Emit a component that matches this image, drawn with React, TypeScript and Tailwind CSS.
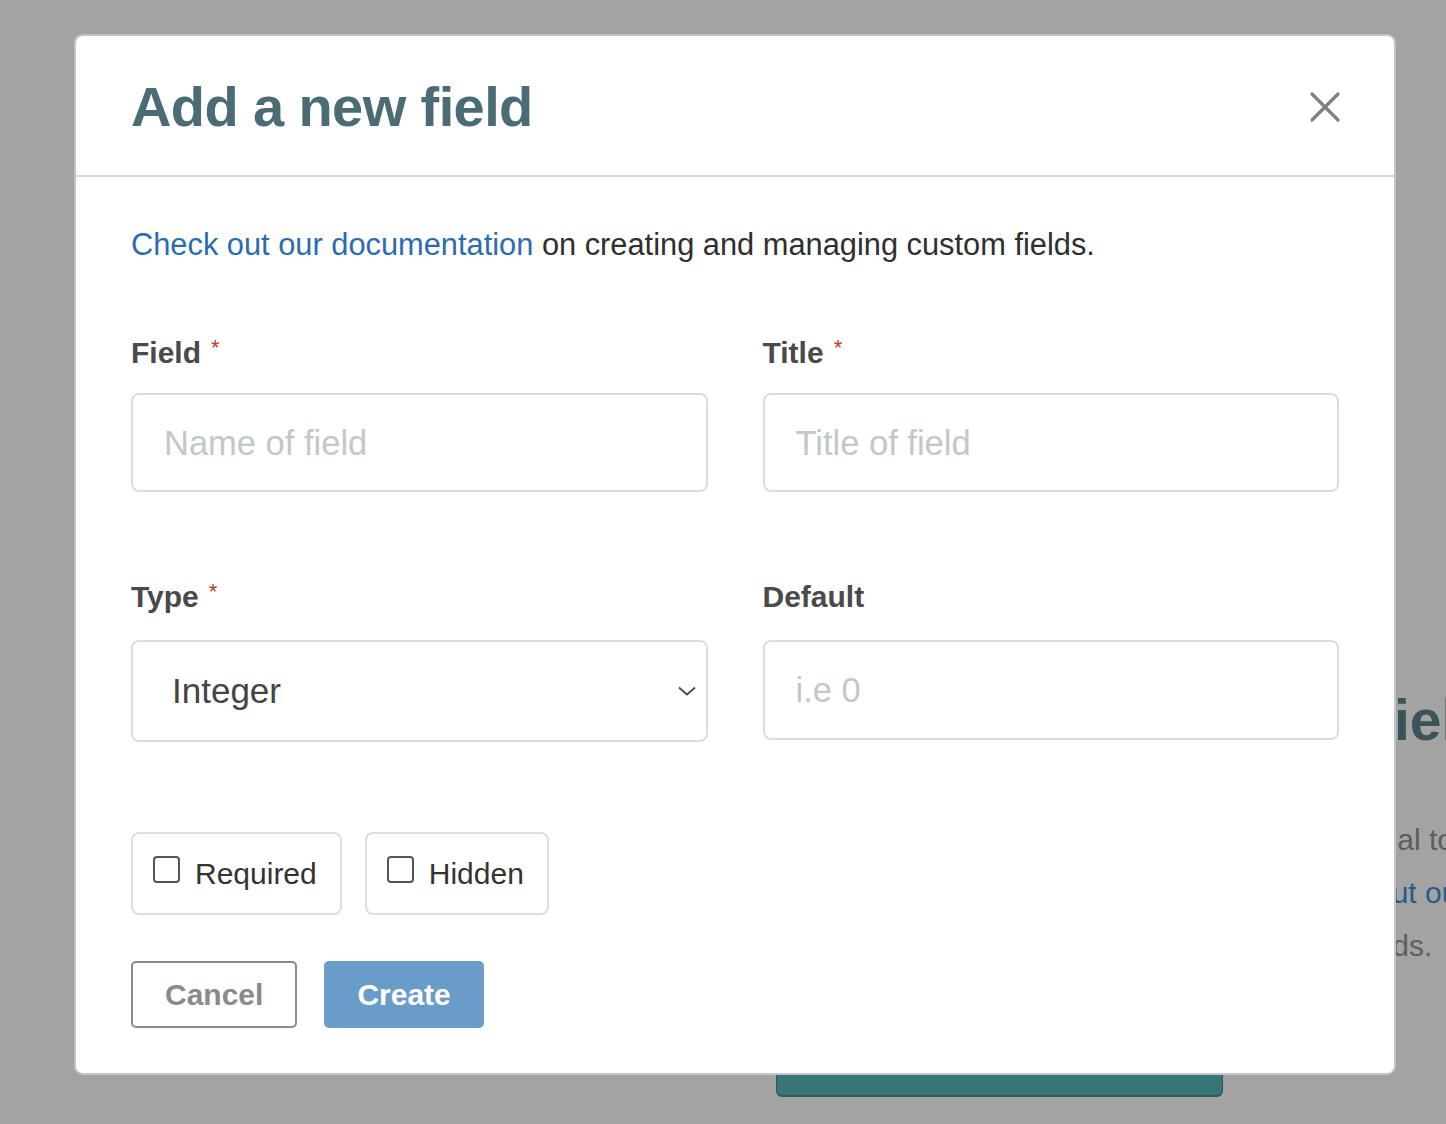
import React from "react";

const font = { fontFamily: '"Liberation Sans", Arial, Helvetica, sans-serif' };

function Label({ text, required }: { text: string; required?: boolean }) {
  return (
    <div className="flex items-start h-[36px] leading-[36px]">
      <span className="text-[30px] font-bold text-[#4a4a4a]">{text}</span>
      {required && (
        <span className="ml-[10px] text-[22px] leading-[22px] mt-[2px] text-[#c0392b]">*</span>
      )}
    </div>
  );
}

function Checkbox({ label }: { label: string }) {
  return (
    <label className="inline-flex items-center h-[83px] border-2 border-[#dedede] rounded-[8px] pl-[20px] pr-[23px]">
      <span className="w-[27px] h-[27px] border-2 border-[#555] rounded-[4px] mb-[8px] bg-white" />
      <span className="ml-[15px] text-[30px] text-[#333]">{label}</span>
    </label>
  );
}

export default function App() {
  return (
    <div className="relative w-[1446px] h-[1124px] overflow-hidden bg-[#a3a3a3]" style={font}>
      {/* background page fragments behind the modal */}
      <div className="absolute left-[1375px] top-[688px] text-[57px] font-bold text-[#3b5459] whitespace-nowrap leading-[64px]">
        fields
      </div>
      <div className="absolute left-[1329px] top-[822px] text-[30px] text-[#5e5e5e] whitespace-nowrap leading-[36px]">
        normal to
      </div>
      <div className="absolute left-[1375px] top-[875px] text-[30px] text-[#2b5a8a] whitespace-nowrap leading-[36px]">
        out our
      </div>
      <div className="absolute left-[1354px] top-[928px] text-[30px] text-[#5e5e5e] whitespace-nowrap leading-[36px]">
        fields.
      </div>
      <div className="absolute left-[776px] top-[1000px] w-[447px] h-[97px] bg-[#387676] rounded-[6px] border-b-2 border-x border-[#2d5a5c]" />

      {/* modal */}
      <div className="absolute left-[74px] top-[34px] w-[1322px] bg-white border-2 border-[#c4c4c4] rounded-[9px]">
        <div className="h-[141px] flex items-center justify-between pl-[55px] pr-[55px] border-b-2 border-[#d6d6d6]">
          <h1 className="text-[56px] font-bold text-[#4b6b75] tracking-[-0.6px] mt-[2px]">Add a new field</h1>
          <svg width="32" height="32" viewBox="0 0 32 32" className="mr-[-2px] mt-[2px]">
            <path d="M3 3 L29 29 M29 3 L3 29" stroke="#7f7f7f" strokeWidth="3.2" strokeLinecap="round" />
          </svg>
        </div>

        <div className="pl-[55px] pr-[55px] pt-[50px] pb-[45px]">
          <p className="text-[30.8px] leading-[36px] text-[#2f2f2f] whitespace-nowrap">
            <span className="text-[#2b6cb0]">Check out our documentation</span> on creating and managing custom fields.
          </p>

          <div className="grid grid-cols-2 gap-x-[55px] mt-[72px]">
            <div>
              <Label text="Field" required />
              <div className="mt-[22px] h-[99px] border-2 border-[#dcdcdc] rounded-[8px] flex items-center pl-[31px] pt-[2px] text-[34.5px] text-[#c2c7ca]">
                Name of field
              </div>
            </div>
            <div>
              <Label text="Title" required />
              <div className="mt-[22px] h-[99px] border-2 border-[#dcdcdc] rounded-[8px] flex items-center pl-[31px] pt-[2px] text-[34.5px] text-[#c2c7ca]">
                Title of field
              </div>
            </div>

            <div className="mt-[87px]">
              <Label text="Type" required />
              <div className="mt-[25px] h-[102px] border-2 border-[#dcdcdc] rounded-[8px] flex items-center justify-between pl-[39px] pr-[10px]">
                <span className="text-[35px] text-[#444]">Integer</span>
                <svg width="18" height="10" viewBox="0 0 18 10">
                  <path d="M1 1.5 L9 8.5 L17 1.5" fill="none" stroke="#4a4a4a" strokeWidth="1.8" />
                </svg>
              </div>
            </div>
            <div className="mt-[87px]">
              <Label text="Default" />
              <div className="mt-[25px] h-[100px] border-2 border-[#dcdcdc] rounded-[8px] flex items-center pl-[31px] pt-[1px] text-[34.5px] text-[#c2c7ca]">
                i.e 0
              </div>
            </div>
          </div>

          <div className="flex gap-[23px] mt-[90px]">
            <Checkbox label="Required" />
            <Checkbox label="Hidden" />
          </div>

          <div className="flex gap-[27px] mt-[46px]">
            <button className="h-[67px] px-[32px] border-2 border-[#8a8a8a] rounded-[5px] text-[30px] font-bold text-[#8a8a8a] bg-white">
              Cancel
            </button>
            <button className="h-[67px] px-[31px] border-2 border-[#6a9cc9] rounded-[5px] text-[30px] font-bold text-white bg-[#6a9cc9]">
              Create
            </button>
          </div>
        </div>
      </div>
    </div>
  );
}
